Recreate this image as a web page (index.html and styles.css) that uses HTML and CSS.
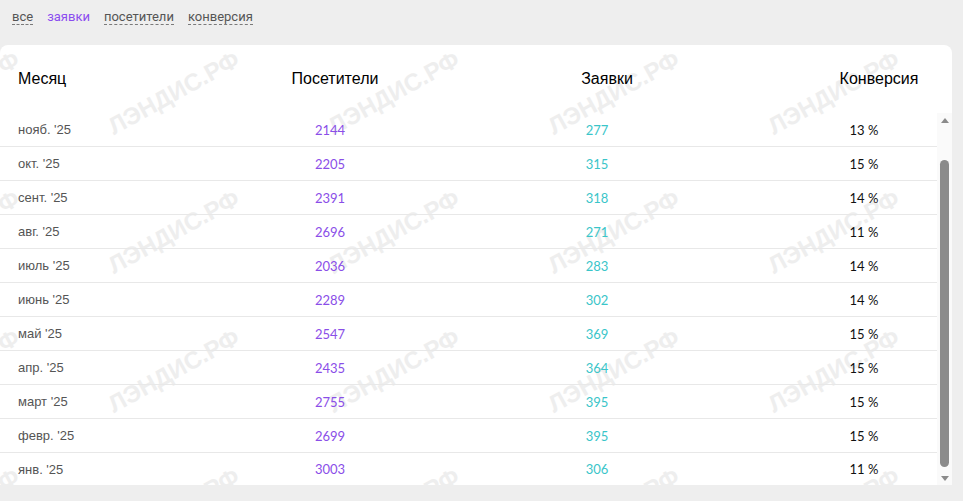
FILE: index.html
```html
<!DOCTYPE html>
<html lang="ru">
<head>
<meta charset="utf-8">
<title>Заявки</title>
<link rel="stylesheet" href="styles.css">
</head>
<body>
<div class="page">
  <div class="watermark" aria-hidden="true">
    <span class="wm">ЛЭНДИС.РФ</span><span class="wm">ЛЭНДИС.РФ</span><span class="wm">ЛЭНДИС.РФ</span><span class="wm">ЛЭНДИС.РФ</span><span class="wm">ЛЭНДИС.РФ</span><span class="wm">ЛЭНДИС.РФ</span>
    <span class="wm">ЛЭНДИС.РФ</span><span class="wm">ЛЭНДИС.РФ</span><span class="wm">ЛЭНДИС.РФ</span><span class="wm">ЛЭНДИС.РФ</span><span class="wm">ЛЭНДИС.РФ</span><span class="wm">ЛЭНДИС.РФ</span>
    <span class="wm">ЛЭНДИС.РФ</span><span class="wm">ЛЭНДИС.РФ</span><span class="wm">ЛЭНДИС.РФ</span><span class="wm">ЛЭНДИС.РФ</span><span class="wm">ЛЭНДИС.РФ</span><span class="wm">ЛЭНДИС.РФ</span>
    <span class="wm">ЛЭНДИС.РФ</span><span class="wm">ЛЭНДИС.РФ</span><span class="wm">ЛЭНДИС.РФ</span><span class="wm">ЛЭНДИС.РФ</span><span class="wm">ЛЭНДИС.РФ</span><span class="wm">ЛЭНДИС.РФ</span>
    <span class="wm">ЛЭНДИС.РФ</span><span class="wm">ЛЭНДИС.РФ</span><span class="wm">ЛЭНДИС.РФ</span><span class="wm">ЛЭНДИС.РФ</span><span class="wm">ЛЭНДИС.РФ</span><span class="wm">ЛЭНДИС.РФ</span>
  </div>

  <nav class="tabs">
    <span class="tab">все</span>
    <span class="tab active">заявки</span>
    <span class="tab">посетители</span>
    <span class="tab">конверсия</span>
  </nav>

  <section class="card">
    <div class="thead">
      <div class="th th-month">Месяц</div>
      <div class="th">Посетители</div>
      <div class="th">Заявки</div>
      <div class="th">Конверсия</div>
    </div>
    <div class="tbody">
      <div class="viewport">
        <div class="rows">
          <div class="row"><span class="c-month">дек. '25</span><span class="c-vis">2318</span><span class="c-lead">301</span><span class="c-conv">13 %</span></div>
          <div class="row"><span class="c-month">нояб. '25</span><span class="c-vis">2144</span><span class="c-lead">277</span><span class="c-conv">13 %</span></div>
          <div class="row"><span class="c-month">окт. '25</span><span class="c-vis">2205</span><span class="c-lead">315</span><span class="c-conv">15 %</span></div>
          <div class="row"><span class="c-month">сент. '25</span><span class="c-vis">2391</span><span class="c-lead">318</span><span class="c-conv">14 %</span></div>
          <div class="row"><span class="c-month">авг. '25</span><span class="c-vis">2696</span><span class="c-lead">271</span><span class="c-conv">11 %</span></div>
          <div class="row"><span class="c-month">июль '25</span><span class="c-vis">2036</span><span class="c-lead">283</span><span class="c-conv">14 %</span></div>
          <div class="row"><span class="c-month">июнь '25</span><span class="c-vis">2289</span><span class="c-lead">302</span><span class="c-conv">14 %</span></div>
          <div class="row"><span class="c-month">май '25</span><span class="c-vis">2547</span><span class="c-lead">369</span><span class="c-conv">15 %</span></div>
          <div class="row"><span class="c-month">апр. '25</span><span class="c-vis">2435</span><span class="c-lead">364</span><span class="c-conv">15 %</span></div>
          <div class="row"><span class="c-month">март '25</span><span class="c-vis">2755</span><span class="c-lead">395</span><span class="c-conv">15 %</span></div>
          <div class="row"><span class="c-month">февр. '25</span><span class="c-vis">2699</span><span class="c-lead">395</span><span class="c-conv">15 %</span></div>
          <div class="row"><span class="c-month">янв. '25</span><span class="c-vis">3003</span><span class="c-lead">306</span><span class="c-conv">11 %</span></div>
        </div>
      </div>
      <div class="scrollbar" aria-hidden="true">
        <div class="sb-btn"><span class="tri-up"></span></div>
        <div class="sb-track"><div class="sb-thumb"></div></div>
        <div class="sb-btn"><span class="tri-down"></span></div>
      </div>
    </div>
  </section>
</div>
</body>
</html>
```

FILE: styles.css
```css
html, body {
  margin: 0;
  padding: 0;
  background: #eeeeee;
}

.page {
  position: relative;
  height: 501px;
  overflow: hidden;
  padding-right: 11px;
  box-sizing: border-box;
}

/* watermark layer: sits above backgrounds, below content */
.watermark {
  position: absolute;
  top: -2px;
  left: -105px;
  z-index: 1;
  pointer-events: none;
  display: grid;
  grid-template-columns: repeat(6, 220px);
  grid-auto-rows: 139px;
}

.wm {
  align-self: end;
  justify-self: start;
  font: bold 24px "Liberation Sans", Arial, sans-serif;
  line-height: 20px;
  color: #eeeeee;
  white-space: nowrap;
  transform: rotate(-29deg);
  transform-origin: 0 100%;
}

/* tabs */
.tabs {
  position: relative;
  z-index: 2;
  height: 45px;
  box-sizing: border-box;
  padding: 10px 0 0 12px;
  display: flex;
  align-items: flex-start;
  font: 13px Roboto, "Liberation Sans", sans-serif;
}

.tab {
  margin-right: 14px;
  line-height: 14px;
  color: #555555;
  border-bottom: 1px dashed #7a7a7a;
}

.tab.active {
  color: #8b4cf0;
  border-bottom-color: transparent;
}

/* card */
.card {
  background: #ffffff;
  border-radius: 8px 8px 0 0;
}

.thead {
  position: relative;
  z-index: 2;
  height: 68px;
  display: grid;
  grid-template-columns: 1fr 120px 120px 120px;
  column-gap: 152px;
  padding: 0 13px 0 18px;
  align-items: center;
  font: 16px "Liberation Sans", Arial, sans-serif;
  color: #000000;
}

.th {
  text-align: center;
  white-space: nowrap;
}

.th-month {
  text-align: left;
}

.tbody {
  position: relative;
  z-index: 2;
  height: 372px;
  display: flex;
}

.viewport {
  flex: 1;
  overflow: hidden;
  display: flex;
  flex-direction: column-reverse;
}

.row {
  display: grid;
  grid-template-columns: 1fr 120px 120px 120px;
  column-gap: 147px;
  padding: 0 13px 0 18px;
  height: 33px;
  align-items: center;
  border-bottom: 1px solid #e8e8e8;
  font-size: 13px;
}

.row:last-child {
  height: 32px;
  border-bottom: 0;
}

.c-month {
  font-family: "Liberation Sans", Arial, sans-serif;
  color: #555555;
  white-space: nowrap;
}

.c-vis, .c-lead, .c-conv {
  font-family: Lato, "Liberation Sans", sans-serif;
  text-align: center;
}

.c-vis { color: #8a4ee8; }
.c-lead { color: #3ac5c9; }
.c-conv { color: #111111; }

/* scrollbar drawn as a column */
.scrollbar {
  width: 15px;
  background: #fafafa;
  display: flex;
  flex-direction: column;
}

.sb-btn {
  height: 15px;
  display: flex;
  align-items: center;
  justify-content: center;
}

.tri-up {
  width: 0;
  height: 0;
  border-left: 4.5px solid transparent;
  border-right: 4.5px solid transparent;
  border-bottom: 5px solid #8b8b8b;
  margin-top: -1px;
}

.tri-down {
  width: 0;
  height: 0;
  border-left: 4.5px solid transparent;
  border-right: 4.5px solid transparent;
  border-top: 5px solid #8b8b8b;
  margin-top: 1px;
}

.sb-track {
  flex: 1;
  display: flex;
  flex-direction: column;
  align-items: center;
  padding: 32px 0 3px;
}

.sb-thumb {
  flex: 1;
  width: 9px;
  border-radius: 5px;
  background: #8b8b8b;
}
```
